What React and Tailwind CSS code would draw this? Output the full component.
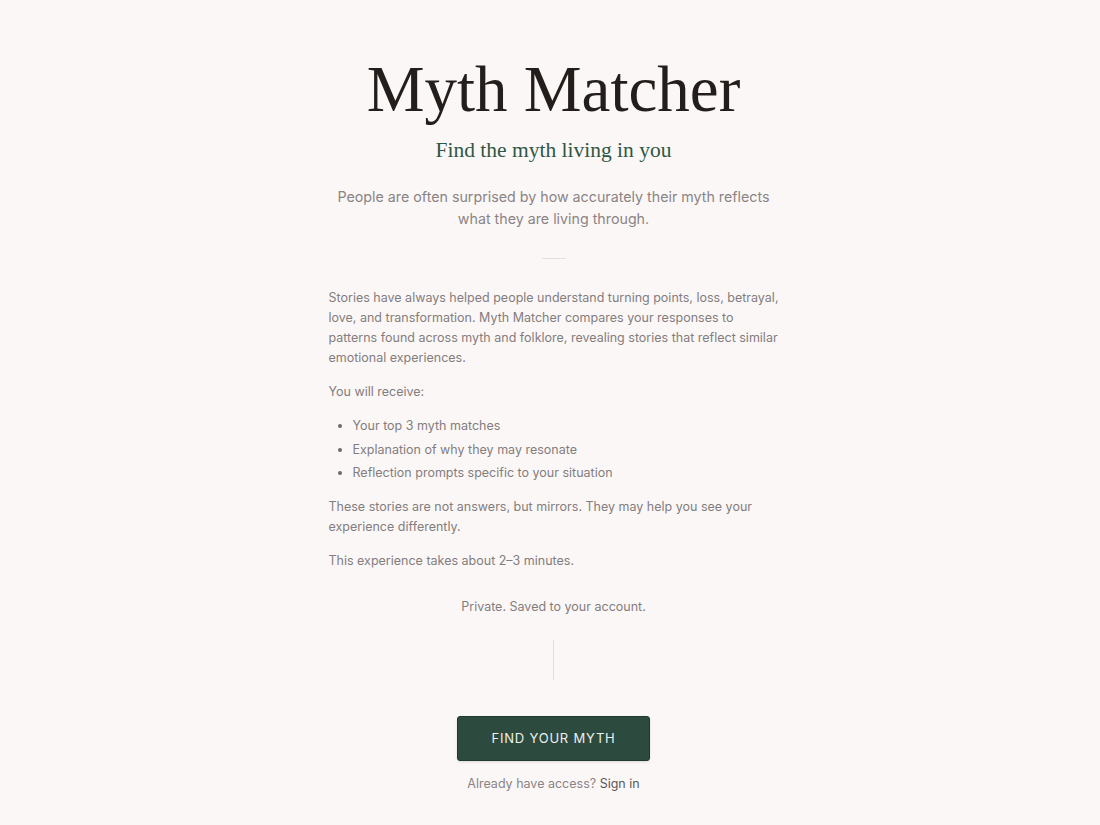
import React from 'react';

const items = [
  'Your top 3 myth matches',
  'Explanation of why they may resonate',
  'Reflection prompts specific to your situation',
];

const App = () => {
  return (
    <div className="min-h-[825px] bg-[#fbf7f7] pl-[7px] font-['Inter',sans-serif] text-[#837d7d]">
      <div className="mx-auto flex w-[450px] flex-col items-center pt-[51px]">
        <h1 className="font-['Liberation_Serif',serif] text-[65px] leading-[76px] text-[#231d1b]">
          Myth Matcher
        </h1>
        <p className="mt-[9px] font-['Liberation_Serif',serif] text-[21.5px] leading-[28px] text-[#2f5744]">
          Find the myth living in you
        </p>
        <p className="mt-[22px] w-[460px] text-center text-[14.25px] leading-[22px] text-[#8a8484]">
          People are often surprised by how accurately their myth reflects what they are living through.
        </p>
        <div className="mt-[28px] h-px w-6 bg-[#e6dfdf]" />

        <div className="mt-[29px] w-full text-[12.5px] leading-[20px]">
          <p>
            Stories have always helped people understand turning points, loss, betrayal, love, and transformation. Myth Matcher compares your responses to patterns found across myth and folklore, revealing stories that reflect similar emotional experiences.
          </p>
          <p className="mt-[14px]">You will receive:</p>
          <ul className="mt-[14px] flex flex-col gap-[3.5px] pl-[24px] list-disc marker:text-[#6e6868]">
            {items.map((item) => (
              <li key={item}>{item}</li>
            ))}
          </ul>
          <p className="mt-[14px]">
            These stories are not answers, but mirrors. They may help you see your experience differently.
          </p>
          <p className="mt-[14px]">This experience takes about 2–3 minutes.</p>
        </div>

        <p className="mt-[26px] text-[12.5px] leading-[20px]">Private. Saved to your account.</p>
        <div className="mt-[23px] h-10 w-px bg-[#e4dddd]" />

        <button className="mt-[36px] h-[45px] w-[193px] rounded-[3px] border border-[#1f3a2e] bg-[#2d4a3e] text-[13px] tracking-[0.8px] text-[#eef0ec] shadow-sm">
          FIND YOUR MYTH
        </button>
        <p className="mt-[13px] text-[12.5px] leading-[20px] text-[#8a8484]">
          Already have access? <span className="text-[#5c5656]">Sign in</span>
        </p>
      </div>
    </div>
  );
};

export default App;
